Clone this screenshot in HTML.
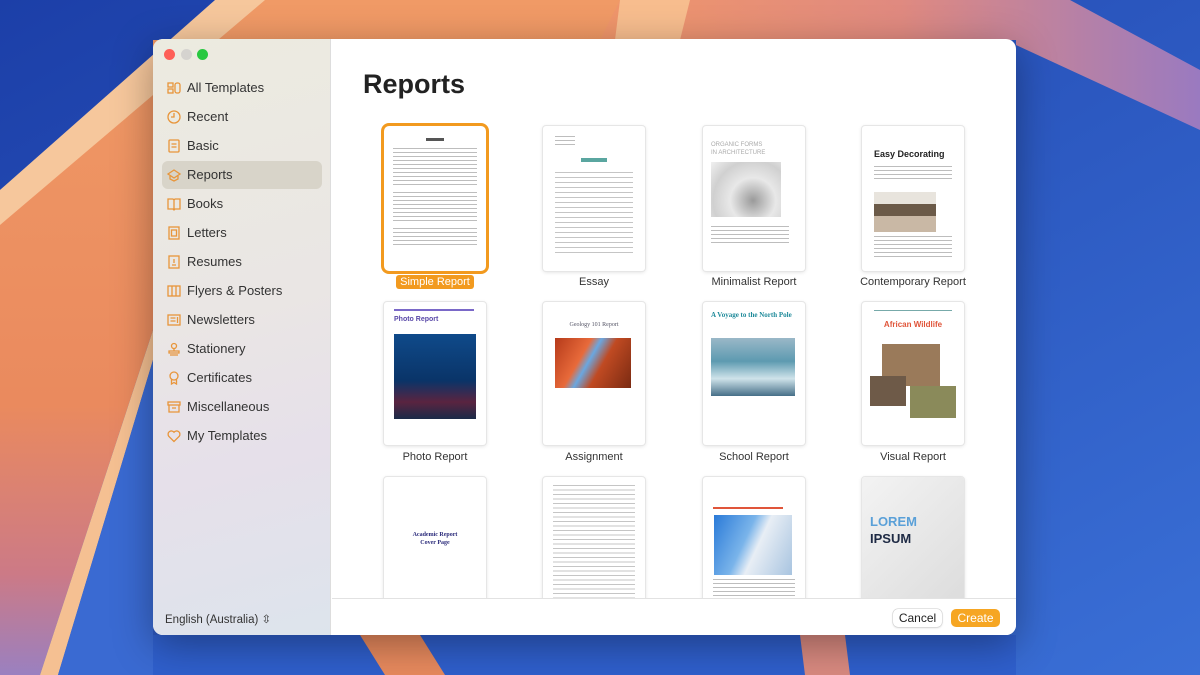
<!DOCTYPE html>
<html><head><meta charset="utf-8"><style>
*{margin:0;padding:0;box-sizing:border-box}
body{width:1200px;height:675px;overflow:hidden;position:relative;font-family:"Liberation Sans",sans-serif;background:#2f5fc4}
.bg{position:absolute;inset:0}
.win{position:absolute;left:153px;top:39px;width:863px;height:596px;border-radius:10px;overflow:hidden;box-shadow:0 10px 40px rgba(0,0,0,.35);background:#fff}
.side{position:absolute;left:0;top:0;width:178px;height:596px;background:linear-gradient(165deg,#ecebe0 0%,#eae6e4 45%,#e6e0ea 70%,#dde4ec 100%);border-right:1px solid #ddd}
.dot{position:absolute;top:10px;width:11px;height:11px;border-radius:50%}
.it{position:absolute;left:9px;width:160px;height:28px;font-size:13px;color:#333;line-height:28px;padding-left:25px;border-radius:6px}
.it.sel{background:#d8d4c9}
.ic{position:absolute;left:5px;top:7px;width:14px;height:14px}
.main{position:absolute;left:179px;top:0;right:0;bottom:0}
h1{position:absolute;left:31px;top:30px;font-size:27px;font-weight:bold;color:#222}
.card{position:absolute;width:102px;background:#fff;box-shadow:0 0 0 1px #e6e6e6,0 1px 4px rgba(0,0,0,.15);border-radius:3px;overflow:hidden}
.lab{position:absolute;width:160px;text-align:center;font-size:11px;color:#333}
.tx{position:absolute;background:repeating-linear-gradient(#bdbdbd 0 1px,transparent 1px 4px)}
.foot{position:absolute;left:0;right:0;top:559px;height:37px;background:#fff;border-top:1px solid #e2e2e2}
.btn{position:absolute;top:10px;height:18px;border-radius:5px;font-size:12px;line-height:18px;text-align:center;width:49px}
</style></head><body>
<svg class="bg" width="1200" height="675" viewBox="0 0 1200 675">
<defs>
<linearGradient id="bl" x1="0" y1="0" x2="1" y2="1"><stop offset="0" stop-color="#1c3fa8"/><stop offset="1" stop-color="#3a6fd6"/></linearGradient>
<linearGradient id="or" x1="0" y1="0" x2="0" y2="1"><stop offset="0" stop-color="#f09a66"/><stop offset=".6" stop-color="#ea8a5e"/><stop offset=".85" stop-color="#cc7a86"/><stop offset="1" stop-color="#9a80c0"/></linearGradient>
<linearGradient id="rt" x1="0" y1="0" x2="1" y2="0"><stop offset="0" stop-color="#f0966a"/><stop offset=".5" stop-color="#e08a80"/><stop offset="1" stop-color="#9a7ac0"/></linearGradient>
</defs>
<rect width="1200" height="675" fill="url(#bl)"/>
<polygon points="230,0 1000,0 1016,40 153,40 153,330 40,675 0,675 0,190" fill="url(#or)"/>
<polygon points="620,0 1070,0 1200,70 1200,130 1016,45 1016,40 600,40" fill="url(#rt)"/>
<polygon points="215,0 265,0 0,225 0,190" fill="#f6c79c"/>
<polygon points="620,0 690,0 680,40 615,40" fill="#f7bd8e"/>
<polygon points="153,330 153,360 58,675 40,675" fill="#f5c092"/>
<polygon points="153,360 153,675 58,675" fill="#3a6ad2"/>
<rect x="153" y="635" width="863" height="40" fill="#2f5fcc"/>
<polygon points="360,635 420,635 445,675 385,675" fill="#e88a5e"/>
<polygon points="800,635 845,635 850,675 805,675" fill="#d98a80"/>
</svg>
<div class="win">
<div class="side">
<div class="dot" style="left:11px;background:#fe5f57"></div>
<div class="dot" style="left:28px;background:#d5d3cf"></div>
<div class="dot" style="left:44px;background:#28c840"></div>
<div class="it" style="top:35px"><svg class="ic" viewBox="0 0 14 14" fill="none" stroke="#e8953a" stroke-width="1.3"><rect x="1" y="2" width="5" height="4"/><rect x="1" y="8" width="5" height="4"/><rect x="8" y="2" width="5" height="10" rx="2"/></svg>All Templates</div>
<div class="it" style="top:64px"><svg class="ic" viewBox="0 0 14 14" fill="none" stroke="#e8953a" stroke-width="1.3"><circle cx="7" cy="7" r="6"/><path d="M7 3v4H4"/></svg>Recent</div>
<div class="it" style="top:93px"><svg class="ic" viewBox="0 0 14 14" fill="none" stroke="#e8953a" stroke-width="1.3"><rect x="2" y="1" width="10" height="12" rx="1"/><path d="M4.5 5h5M4.5 8h5"/></svg>Basic</div>
<div class="it sel" style="top:122px"><svg class="ic" viewBox="0 0 14 14" fill="none" stroke="#e8953a" stroke-width="1.3"><path d="M1 6l6-4 6 4-6 4z"/><path d="M3 8v3l4 2 4-2V8"/></svg>Reports</div>
<div class="it" style="top:151px"><svg class="ic" viewBox="0 0 14 14" fill="none" stroke="#e8953a" stroke-width="1.3"><path d="M1 2h5l1 1 1-1h5v10H8l-1 1-1-1H1zM7 3v10"/></svg>Books</div>
<div class="it" style="top:180px"><svg class="ic" viewBox="0 0 14 14" fill="none" stroke="#e8953a" stroke-width="1.3"><rect x="2" y="1" width="10" height="12"/><rect x="4.5" y="4" width="5" height="6"/></svg>Letters</div>
<div class="it" style="top:209px"><svg class="ic" viewBox="0 0 14 14" fill="none" stroke="#e8953a" stroke-width="1.3"><rect x="2" y="1" width="10" height="12"/><path d="M7 4v4M5 10h4"/></svg>Resumes</div>
<div class="it" style="top:238px"><svg class="ic" viewBox="0 0 14 14" fill="none" stroke="#e8953a" stroke-width="1.3"><rect x="1" y="2" width="12" height="10"/><path d="M5 2v10M9 2v10"/></svg>Flyers &amp; Posters</div>
<div class="it" style="top:267px"><svg class="ic" viewBox="0 0 14 14" fill="none" stroke="#e8953a" stroke-width="1.3"><rect x="1" y="2" width="12" height="10"/><path d="M3.5 5h5M3.5 8h5M10.5 4v6"/></svg>Newsletters</div>
<div class="it" style="top:296px"><svg class="ic" viewBox="0 0 14 14" fill="none" stroke="#e8953a" stroke-width="1.3"><circle cx="7" cy="4" r="2.5"/><path d="M7 6.5V9M2 9h10v2H2zM3 13h8"/></svg>Stationery</div>
<div class="it" style="top:325px"><svg class="ic" viewBox="0 0 14 14" fill="none" stroke="#e8953a" stroke-width="1.3"><circle cx="7" cy="5" r="4"/><path d="M4.5 8.5V13L7 11.5 9.5 13V8.5"/></svg>Certificates</div>
<div class="it" style="top:354px"><svg class="ic" viewBox="0 0 14 14" fill="none" stroke="#e8953a" stroke-width="1.3"><rect x="1" y="2" width="12" height="3"/><path d="M2 5v7h10V5M5 8h4"/></svg>Miscellaneous</div>
<div class="it" style="top:383px"><svg class="ic" viewBox="0 0 14 14" fill="none" stroke="#e8953a" stroke-width="1.3"><path d="M7 12.5L1.8 7.3A3 3 0 0 1 7 3.2a3 3 0 0 1 5.2 4.1z"/></svg>My Templates</div>
<div style="position:absolute;left:12px;top:573px;font-size:11.5px;color:#333">English (Australia) ⇳</div>
</div>
<div class="main">
<h1>Reports</h1>
<div class="card" style="left:52px;top:87px;height:145px;box-shadow:0 0 0 3px #f29a1f;border-radius:5px">
<div style="position:absolute;left:42px;top:12px;width:18px;height:3px;background:#555"></div>
<div class="tx" style="left:9px;top:22px;width:84px;height:40px"></div>
<div class="tx" style="left:9px;top:66px;width:84px;height:32px"></div>
<div class="tx" style="left:9px;top:102px;width:84px;height:20px"></div>
</div>
<div class="lab" style="left:23px;top:237px"><span style="background:#f29a1f;color:#fff;padding:1px 4px;border-radius:3px">Simple Report</span></div>
<div class="card" style="left:211px;top:87px;height:145px">
<div class="tx" style="left:12px;top:10px;width:20px;height:12px"></div>
<div style="position:absolute;left:38px;top:32px;width:26px;height:4px;background:#5aa6a0"></div>
<div class="tx" style="left:12px;top:46px;width:78px;height:82px;background:repeating-linear-gradient(#c5c5c5 0 1px,transparent 1px 5px)"></div>
</div>
<div class="lab" style="left:182px;top:237px">Essay</div>
<div class="card" style="left:371px;top:87px;height:145px">
<div style="position:absolute;left:8px;top:15px;font-size:6px;color:#aaa;line-height:8px">ORGANIC FORMS<br>IN ARCHITECTURE</div>
<div style="position:absolute;left:8px;top:36px;width:70px;height:55px;background:radial-gradient(circle at 60% 70%,#9a9a9a,#e8e8e8 40%,#d0d0d0 70%,#f0f0f0)"></div>
<div class="tx" style="left:8px;top:100px;width:78px;height:18px"></div>
</div>
<div class="lab" style="left:342px;top:237px">Minimalist Report</div>
<div class="card" style="left:530px;top:87px;height:145px">
<div style="position:absolute;left:12px;top:23px;font-size:9px;font-weight:bold;color:#222">Easy Decorating</div>
<div class="tx" style="left:12px;top:40px;width:78px;height:14px"></div>
<div style="position:absolute;left:12px;top:66px;width:62px;height:40px;background:linear-gradient(#e8e4dd 0 30%,#6b5a48 30% 60%,#c9b8a5 60%)"></div>
<div class="tx" style="left:12px;top:110px;width:78px;height:22px"></div>
</div>
<div class="lab" style="left:501px;top:237px">Contemporary Report</div>
<div class="card" style="left:52px;top:263px;height:143px">
<div style="position:absolute;left:10px;top:7px;width:80px;height:2px;background:#7a68c8"></div>
<div style="position:absolute;left:10px;top:14px;font-size:7px;font-weight:bold;color:#5948a8">Photo Report</div>
<div style="position:absolute;left:10px;top:32px;width:82px;height:85px;background:linear-gradient(#0f4a8a,#0a3468 55%,#5a2440 80%,#1a2a48)"></div>
</div>
<div class="lab" style="left:23px;top:412px">Photo Report</div>
<div class="card" style="left:211px;top:263px;height:143px">
<div style="position:absolute;left:0;width:102px;top:20px;text-align:center;font-size:6px;color:#556;font-family:'Liberation Serif',serif">Geology 101 Report</div>
<div style="position:absolute;left:12px;top:36px;width:76px;height:50px;background:linear-gradient(120deg,#b53a1a,#e86a3a 35%,#6aa7e0 45%,#c04a22 60%,#7a2a12)"></div>
</div>
<div class="lab" style="left:182px;top:412px">Assignment</div>
<div class="card" style="left:371px;top:263px;height:143px">
<div style="position:absolute;left:8px;top:9px;font-size:7px;font-weight:bold;color:#1e8a9a;font-family:'Liberation Serif',serif">A Voyage to the North Pole</div>
<div style="position:absolute;left:8px;top:36px;width:84px;height:58px;background:linear-gradient(#9ab8c8,#5d9ab0 40%,#cfe3ea 70%,#466f88)"></div>
</div>
<div class="lab" style="left:342px;top:412px">School Report</div>
<div class="card" style="left:530px;top:263px;height:143px">
<div style="position:absolute;left:12px;top:8px;width:78px;height:1px;background:#7aa"></div>
<div style="position:absolute;left:0;width:102px;top:18px;text-align:center;font-size:8px;font-weight:bold;color:#e0553a">African Wildlife</div>
<div style="position:absolute;left:20px;top:42px;width:58px;height:42px;background:#9a7a5a"></div>
<div style="position:absolute;left:8px;top:74px;width:36px;height:30px;background:#6e5a48"></div>
<div style="position:absolute;left:48px;top:84px;width:46px;height:32px;background:#8a8a5a"></div>
</div>
<div class="lab" style="left:501px;top:412px">Visual Report</div>
<div class="card" style="left:52px;top:438px;height:130px">
<div style="position:absolute;left:0;width:102px;top:54px;text-align:center;font-size:6px;font-weight:bold;color:#2a2a7a;font-family:'Liberation Serif',serif;line-height:8px">Academic Report<br>Cover Page</div>
</div>
<div class="card" style="left:211px;top:438px;height:130px">
<div class="tx" style="left:10px;top:8px;width:82px;height:120px;background:repeating-linear-gradient(#c5c5c5 0 1px,transparent 1px 4.5px)"></div>
</div>
<div class="card" style="left:371px;top:438px;height:130px">
<div style="position:absolute;left:10px;top:30px;width:70px;height:2px;background:#e0553a"></div>
<div style="position:absolute;left:11px;top:38px;width:78px;height:60px;background:linear-gradient(115deg,#2a7ad8,#7ab4ea 40%,#e8eef5 55%,#a8c4e0)"></div>
<div class="tx" style="left:10px;top:102px;width:82px;height:20px"></div>
</div>
<div class="card" style="left:530px;top:438px;height:130px;background:linear-gradient(135deg,#f3f3f3,#dcdcdc)">
<div style="position:absolute;left:8px;top:36px;font-size:13px;font-weight:bold;color:#5aa0d8;line-height:17px">LOREM<br><span style="color:#1e2a44">IPSUM</span></div>
</div>
<div class="foot">
<div class="btn" style="left:561px;background:#fff;color:#222;box-shadow:0 0 0 .5px #ccc,0 1px 2px rgba(0,0,0,.15)">Cancel</div>
<div class="btn" style="left:619px;background:#f6a623;color:#fff">Create</div>
</div>
</div>
</div>
</body></html>
